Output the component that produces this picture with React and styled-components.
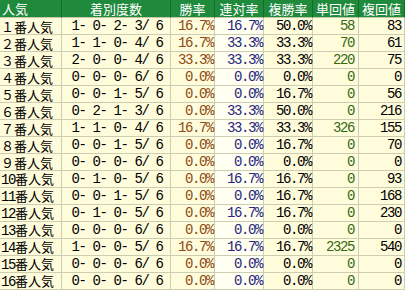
import React from "react";
import styled, { createGlobalStyle } from "styled-components";

const GlobalStyle = createGlobalStyle`
  html, body {
    margin: 0;
    padding: 0;
    background: #ffffff;
  }
`;

const rows = [
  ["１", "1- 0- 2- 3/ 6", "16.7%", "16.7%", "50.0%", "58", "83"],
  ["２", "1- 1- 0- 4/ 6", "16.7%", "33.3%", "33.3%", "70", "61"],
  ["３", "2- 0- 0- 4/ 6", "33.3%", "33.3%", "33.3%", "220", "75"],
  ["４", "0- 0- 0- 6/ 6", "0.0%", "0.0%", "0.0%", "0", "0"],
  ["５", "0- 0- 1- 5/ 6", "0.0%", "0.0%", "16.7%", "0", "56"],
  ["６", "0- 2- 1- 3/ 6", "0.0%", "33.3%", "50.0%", "0", "216"],
  ["７", "1- 1- 0- 4/ 6", "16.7%", "33.3%", "33.3%", "326", "155"],
  ["８", "0- 0- 1- 5/ 6", "0.0%", "0.0%", "16.7%", "0", "70"],
  ["９", "0- 0- 0- 6/ 6", "0.0%", "0.0%", "0.0%", "0", "0"],
  ["10", "0- 1- 0- 5/ 6", "0.0%", "16.7%", "16.7%", "0", "93"],
  ["11", "0- 0- 1- 5/ 6", "0.0%", "0.0%", "16.7%", "0", "168"],
  ["12", "0- 1- 0- 5/ 6", "0.0%", "16.7%", "16.7%", "0", "230"],
  ["13", "0- 0- 0- 6/ 6", "0.0%", "0.0%", "0.0%", "0", "0"],
  ["14", "1- 0- 0- 5/ 6", "16.7%", "16.7%", "16.7%", "2325", "540"],
  ["15", "0- 0- 0- 6/ 6", "0.0%", "0.0%", "0.0%", "0", "0"],
  ["16", "0- 0- 0- 6/ 6", "0.0%", "0.0%", "0.0%", "0", "0"],
];

const headers = ["人気", "着別度数", "勝率", "連対率", "複勝率", "単回値", "複回値"];

const Grid = styled.div`
  display: grid;
  grid-template-columns: 62px 109px 44px 49px 49px 46px 46px;
  grid-template-rows: 18px;
  grid-auto-rows: 17px;
  width: 405px;
  font-family: "Noto Sans CJK JP", sans-serif;
  font-size: 13px;
`;

const Head = styled.div`
  box-sizing: border-box;
  display: flex;
  align-items: center;
  justify-content: ${(p) => (p.$left ? "flex-start" : "center")};
  background: #1f8a3c;
  color: #ffffff;
  border-right: 1px solid #176b2d;
  border-bottom: 1px solid #c8c8a8;
  line-height: 15px;
  padding-left: ${(p) => (p.$left ? "2px" : "0")};
  white-space: nowrap;
`;

const Cell = styled.div`
  box-sizing: border-box;
  display: flex;
  align-items: center;
  justify-content: ${(p) => p.$justify || "flex-end"};
  background: ${(p) => p.$bg || "#fffcdc"};
  color: ${(p) => p.$color || "#000000"};
  border-right: 1px solid #cdcdb2;
  border-bottom: 1px solid #cdcdb2;
  line-height: 15px;
  white-space: nowrap;
  padding-right: ${(p) => p.$pr || "0"};
  padding-left: ${(p) => p.$pl || "0"};
`;

const Mono = styled.span`
  font-family: "Liberation Mono", monospace;
  font-size: 14px;
  letter-spacing: -1.4px;
  white-space: pre;
`;

export default function App() {
  return (
    <>
      <GlobalStyle />
      <Grid>
        {headers.map((h, i) => (
          <Head key={h} $left={i === 0}>
            {h}
          </Head>
        ))}
        {rows.map((r) => (
          <React.Fragment key={r[0]}>
            <Cell $justify="flex-start" $pl="1px">
              <span>
                {r[0].length === 1 ? r[0] : <Mono>{r[0]}</Mono>}
                番人気
              </span>
            </Cell>
            <Cell $justify="center" $pl="2px">
              <Mono>{r[1]}</Mono>
            </Cell>
            <Cell $color="#8b4a14" $pr="1px">
              <Mono>{r[2]}</Mono>
            </Cell>
            <Cell $color="#26267e" $bg="#fffff2" $pr="1px">
              <Mono>{r[3]}</Mono>
            </Cell>
            <Cell $pr="1px">
              <Mono>{r[4]}</Mono>
            </Cell>
            <Cell $color="#336a12" $pr="4px">
              <Mono>{r[5]}</Mono>
            </Cell>
            <Cell $pr="3px">
              <Mono>{r[6]}</Mono>
            </Cell>
          </React.Fragment>
        ))}
      </Grid>
    </>
  );
}
